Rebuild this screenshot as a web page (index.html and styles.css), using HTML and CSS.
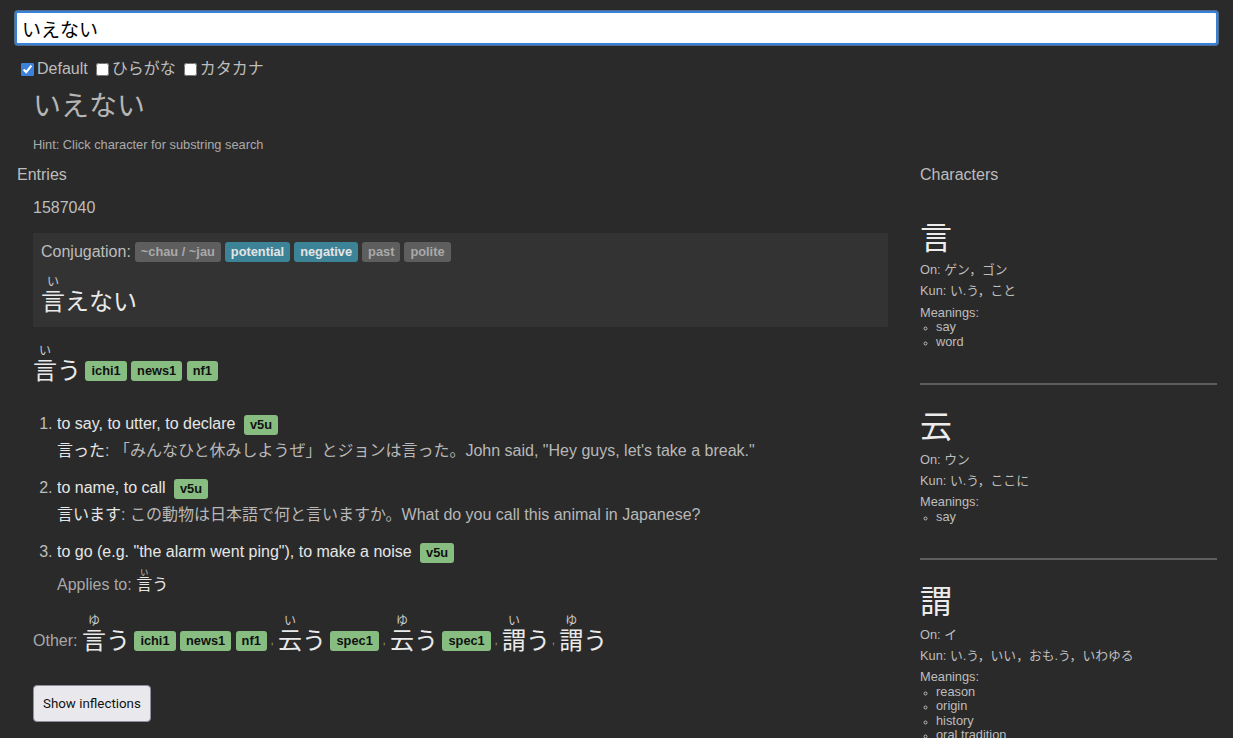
FILE: index.html
```html
<!DOCTYPE html>
<html lang="ja">
<head>
<meta charset="utf-8">
<title>いえない</title>
<link rel="stylesheet" href="styles.css">
</head>
<body>
<div class="page">
  <input class="search" type="text" value="いえない">
  <div class="filters">
    <label class="filter"><input type="checkbox" checked>Default</label>
    <label class="filter"><input type="checkbox">ひらがな</label>
    <label class="filter"><input type="checkbox">カタカナ</label>
  </div>
  <div class="query">いえない</div>
  <div class="hint">Hint: Click character for substring search</div>

  <div class="columns">
    <section class="entries">
      <h2 class="col-title">Entries</h2>
      <div class="entry">
        <div class="entry-id">1587040</div>
        <div class="conj">
          <div class="conj-row">
            <span class="conj-label">Conjugation:</span>
            <span class="badge gray">~chau / ~jau</span>
            <span class="badge blue">potential</span>
            <span class="badge blue">negative</span>
            <span class="badge gray">past</span>
            <span class="badge gray">polite</span>
          </div>
          <div class="conj-word"><ruby>言<rt>い</rt></ruby>えない</div>
        </div>

        <div class="headword">
          <span class="word"><ruby>言<rt>い</rt></ruby>う</span>
          <span class="badge green">ichi1</span>
          <span class="badge green">news1</span>
          <span class="badge green">nf1</span>
        </div>

        <ol class="senses">
          <li class="sense">
            <div class="def">to say, to utter, to declare <span class="badge green">v5u</span></div>
            <div class="example"><span class="ex-word">言った</span>: 「みんなひと休みしようぜ」とジョンは言った。John said, "Hey guys, let's take a break."</div>
          </li>
          <li class="sense">
            <div class="def">to name, to call <span class="badge green">v5u</span></div>
            <div class="example"><span class="ex-word">言います</span>: この動物は日本語で何と言いますか。What do you call this animal in Japanese?</div>
          </li>
          <li class="sense">
            <div class="def">to go (e.g. "the alarm went ping"), to make a noise <span class="badge green">v5u</span></div>
            <div class="applies">Applies to: <span class="small-word"><ruby>言<rt>い</rt></ruby>う</span></div>
          </li>
        </ol>

        <div class="other">
          <span class="other-label">Other:</span>
          <span class="word"><ruby>言<rt>ゆ</rt></ruby>う</span>
          <span class="badge green">ichi1</span>
          <span class="badge green">news1</span>
          <span class="badge green">nf1</span><span class="comma after-badge">,</span>
          <span class="word"><ruby>云<rt>い</rt></ruby>う</span>
          <span class="badge green">spec1</span><span class="comma after-badge">,</span>
          <span class="word"><ruby>云<rt>ゆ</rt></ruby>う</span>
          <span class="badge green">spec1</span><span class="comma after-badge">,</span>
          <span class="word"><ruby>謂<rt>い</rt></ruby>う</span><span class="comma">,</span>
          <span class="word"><ruby>謂<rt>ゆ</rt></ruby>う</span>
        </div>

        <button class="inflect-btn" type="button">Show inflections</button>
      </div>
    </section>

    <aside class="characters">
      <h2 class="col-title">Characters</h2>
      <div class="char">
        <div class="kanji">言</div>
        <p class="reading">On: ゲン，ゴン</p>
        <p class="reading">Kun: い.う，こと</p>
        <div class="meanings-label">Meanings:</div>
        <ul class="meanings">
          <li>say</li>
          <li>word</li>
        </ul>
      </div>
      <div class="char">
        <div class="kanji">云</div>
        <p class="reading">On: ウン</p>
        <p class="reading">Kun: い.う，ここに</p>
        <div class="meanings-label">Meanings:</div>
        <ul class="meanings">
          <li>say</li>
        </ul>
      </div>
      <div class="char">
        <div class="kanji">謂</div>
        <p class="reading">On: イ</p>
        <p class="reading">Kun: い.う，いい，おも.う，いわゆる</p>
        <div class="meanings-label">Meanings:</div>
        <ul class="meanings">
          <li>reason</li>
          <li>origin</li>
          <li>history</li>
          <li>oral tradition</li>
        </ul>
      </div>
    </aside>
  </div>
</div>
</body>
</html>
```

FILE: styles.css
```css
html, body {
  margin: 0;
  padding: 0;
  background: #2a2a2a;
}

body {
  color: #bdbdbd;
  font-family: "Liberation Sans", "Noto Sans CJK JP", sans-serif;
  font-size: 16px;
}

.page {
  padding: 11px 15px 0 15px;
}

.search {
  display: block;
  box-sizing: border-box;
  width: 100%;
  height: 34px;
  margin: 0;
  padding: 0 5px;
  font-family: "Liberation Sans", "Noto Sans CJK JP", sans-serif;
  font-size: 19px;
  color: #000;
  background: #fff;
  border: 2px solid #3a80d6;
  border-radius: 3px;
  box-shadow: 0 0 0 1px #4e6c8c;
  outline: none;
}

.filters {
  display: flex;
  align-items: center;
  margin-top: 15px;
  padding-left: 2px;
  line-height: 18px;
}

.filter {
  display: inline-flex;
  align-items: center;
  margin-right: 4px;
}

.filter input {
  width: 13px;
  height: 13px;
  margin: 0 3px 0 4px;
  accent-color: #3b82dc;
}

.query {
  margin-top: 9px;
  padding-left: 18px;
  font-size: 28px;
  line-height: 40px;
  color: #b5b5b5;
}

.hint {
  margin-top: 11px;
  padding-left: 18px;
  font-size: 12.8px;
  line-height: 14px;
  color: #aaa;
}

.columns {
  display: grid;
  grid-template-columns: 1fr 297px;
  column-gap: 32px;
  margin: 0 1px 0 2px;
}

.col-title {
  margin: 13px 0 0 0;
  font-size: 16px;
  font-weight: normal;
  line-height: 19px;
  color: #bdbdbd;
}

.entry {
  padding-left: 16px;
}

.entry-id {
  margin-top: 14px;
  line-height: 19px;
}

.conj {
  margin-top: 16px;
  padding: 8px;
  background: #333333;
}

.conj-row {
  display: flex;
  align-items: center;
  gap: 4px;
  line-height: 22px;
}

.conj-word {
  margin-top: 12px;
  font-size: 24px;
  line-height: 34px;
  color: #eaeaea;
}

.badge {
  display: inline-block;
  padding: 0 6px;
  font-family: "Liberation Sans", sans-serif;
  font-size: 12.8px;
  font-weight: bold;
  line-height: 20px;
  border-radius: 3px;
  vertical-align: middle;
}

.badge.gray {
  background: #5e5e5e;
  color: #a9a9a9;
}

.badge.blue {
  background: #3d8397;
  color: #e4e4e4;
}

.badge.green {
  background: #88bd82;
  color: #111;
}

.headword {
  margin-top: 17px;
  line-height: 34px;
}

.word {
  font-size: 24px;
  color: #eaeaea;
  vertical-align: middle;
}

rt {
  font-size: 50%;
  color: #d0d0d0;
}

.senses {
  margin: 25px 0 0 0;
  padding-left: 24px;
}

.sense {
  margin-bottom: 15px;
  line-height: 22px;
}

.def {
  color: #e6e6e6;
}

.def .badge {
  margin-left: 4px;
}

.example {
  margin-top: 5px;
  color: #b8b8b8;
}

.ex-word {
  color: #e6e6e6;
}

.applies {
  margin-top: 5px;
  color: #a8a8a8;
}

.small-word {
  color: #e6e6e6;
}

.other {
  margin-top: 18px;
  line-height: 34px;
  color: #a8a8a8;
}

.other-label {
  vertical-align: middle;
}

.comma {
  font-size: 10px;
  margin: 0 0 0 2px;
  vertical-align: middle;
}

.comma.after-badge {
  margin-left: 4px;
}

.inflect-btn {
  display: block;
  margin-top: 27px;
  padding: 0 9px;
  height: 37px;
  font-family: Roboto, "Liberation Sans", sans-serif;
  font-size: 13.33px;
  color: #111;
  background: #e9e9ed;
  border: 1px solid #8f8f9d;
  border-radius: 4px;
}

.characters {
  min-width: 0;
}

.char {
  padding: 24px 0 34px 0;
  border-bottom: 2px solid #5e5e5e;
}

.characters .col-title + .char {
  padding-top: 36px;
}

.kanji {
  font-size: 32px;
  line-height: 37px;
  color: #ececec;
}

.reading {
  margin: 6.4px 0;
  font-size: 12.8px;
  line-height: 14.7px;
}

.meanings-label {
  font-size: 12.8px;
  line-height: 14.7px;
}

.meanings {
  margin: 0;
  padding-left: 16px;
  list-style: circle;
  font-size: 12.8px;
  line-height: 14.6px;
}

.meanings li::marker {
  font-size: 9px;
}
```
